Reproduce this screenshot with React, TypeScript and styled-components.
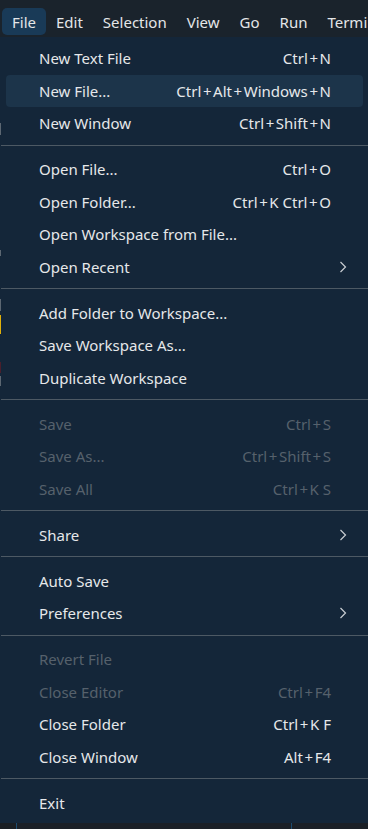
import styled, { createGlobalStyle } from "styled-components";

const GlobalStyle = createGlobalStyle`
  html, body {
    margin: 0;
    padding: 0;
    background: #1a1f24;
  }

  body {
    font-family: "Noto Sans", "Open Sans", sans-serif;
    -webkit-font-smoothing: antialiased;
  }
`;

const Page = styled.div`
  width: 368px;
  height: 829px;
  overflow: hidden;
  display: flex;
  flex-direction: column;
`;

const MenuBar = styled.div`
  height: 37px;
  box-sizing: border-box;
  padding: 8px 0 2px 2px;
  display: flex;
  background-color: #1a232c;
  white-space: nowrap;
  overflow: hidden;
`;

interface BarItemProps {
  $open?: boolean;
}

const BarItem = styled.div<BarItemProps>`
  height: 27px;
  padding: 0 10px;
  display: flex;
  align-items: center;
  border-radius: 5px;
  font-size: 15px;
  color: #e4e6e8;
  background-color: ${(props) => (props.$open ? "#193a57" : "transparent")};
`;

const Body = styled.div`
  display: flex;
  height: 786px;
`;

const Gutter = styled.div`
  width: 1px;
  background: linear-gradient(
    to bottom,
    #142639 0,
    #142639 86px,
    #5c6772 86px,
    #5c6772 98px,
    #142639 98px,
    #142639 213px,
    #5c6772 213px,
    #5c6772 219px,
    #142639 219px,
    #142639 262px,
    #5c6772 262px,
    #5c6772 274px,
    #142639 274px,
    #142639 278px,
    #e0b00a 278px,
    #e0b00a 297px,
    #142639 297px,
    #142639 325px,
    #4a1f2c 325px,
    #4a1f2c 336px,
    #142639 336px,
    #142639 339px,
    #5c6772 339px,
    #5c6772 349px,
    #142639 349px
  );
`;

const Panel = styled.div`
  flex: 1;
  box-sizing: border-box;
  padding: 5px 5px 4px;
  background-color: #142639;
  display: flex;
  flex-direction: column;
`;

interface ItemProps {
  $active?: boolean;
  $disabled?: boolean;
}

const Item = styled.div<ItemProps>`
  position: relative;
  height: 32.5px;
  flex-shrink: 0;
  padding: 0 32px 0 33px;
  display: flex;
  align-items: center;
  justify-content: space-between;
  border-radius: 4px;
  font-size: 15px;
  color: ${(props) => (props.$disabled ? "#56616c" : "#e6e8ea")};
  background-color: ${(props) => (props.$active ? "#1c344a" : "transparent")};
  white-space: nowrap;
`;

const Shortcut = styled.span`
  margin-left: 16px;
`;

const Plus = styled.span`
  padding: 0 1.6px;
`;

const Chevron = styled.svg`
  position: absolute;
  right: 16px;
  top: 50%;
  transform: translateY(-50%);
`;

const Separator = styled.div`
  height: 1px;
  flex-shrink: 0;
  margin: 5px -5px 7.5px;
  background-color: #4d5964;
`;

const Footer = styled.div`
  flex: 1;
  display: flex;
  background-color: #1a1e23;
`;

interface PaneProps {
  $width?: number;
  $border?: boolean;
}

const Pane = styled.div<PaneProps>`
  ${(props) => (props.$width ? `width: ${props.$width}px;` : "flex: 1;")}
  border-left: ${(props) => (props.$border ? "1px solid #1c4b70" : "none")};
  background-color: ${(props) => (props.$width === 16 ? "#1a1e23" : "#1b2027")};
`;

type Entry =
  | "sep"
  | {
      label: string;
      shortcut?: string;
      submenu?: boolean;
      disabled?: boolean;
      active?: boolean;
    };

const barItems = ["File", "Edit", "Selection", "View", "Go", "Run", "Terminal"];

const entries: Entry[] = [
  { label: "New Text File", shortcut: "Ctrl+N" },
  { label: "New File...", shortcut: "Ctrl+Alt+Windows+N", active: true },
  { label: "New Window", shortcut: "Ctrl+Shift+N" },
  "sep",
  { label: "Open File...", shortcut: "Ctrl+O" },
  { label: "Open Folder...", shortcut: "Ctrl+K Ctrl+O" },
  { label: "Open Workspace from File..." },
  { label: "Open Recent", submenu: true },
  "sep",
  { label: "Add Folder to Workspace..." },
  { label: "Save Workspace As..." },
  { label: "Duplicate Workspace" },
  "sep",
  { label: "Save", shortcut: "Ctrl+S", disabled: true },
  { label: "Save As...", shortcut: "Ctrl+Shift+S", disabled: true },
  { label: "Save All", shortcut: "Ctrl+K S", disabled: true },
  "sep",
  { label: "Share", submenu: true },
  "sep",
  { label: "Auto Save" },
  { label: "Preferences", submenu: true },
  "sep",
  { label: "Revert File", disabled: true },
  { label: "Close Editor", shortcut: "Ctrl+F4", disabled: true },
  { label: "Close Folder", shortcut: "Ctrl+K F" },
  { label: "Close Window", shortcut: "Alt+F4" },
  "sep",
  { label: "Exit" },
];

// Segoe-style shortcuts have a wider "+" than Noto Sans
function renderShortcut(text: string) {
  return text.split("+").map((part, i) => (
    <span key={i}>
      {i > 0 && <Plus>+</Plus>}
      {part}
    </span>
  ));
}

function App() {
  return (
    <>
      <GlobalStyle />
      <Page>
        <MenuBar>
          {barItems.map((name, i) => (
            <BarItem key={name} $open={i === 0}>
              {name}
            </BarItem>
          ))}
        </MenuBar>
        <Body>
          <Gutter />
          <Panel>
            {entries.map((entry, i) => {
              if (entry === "sep") return <Separator key={i} />;
              return (
                <Item key={i} $active={entry.active} $disabled={entry.disabled}>
                  <span>{entry.label}</span>
                  {entry.shortcut && (
                    <Shortcut>{renderShortcut(entry.shortcut)}</Shortcut>
                  )}
                  {entry.submenu && (
                    <Chevron width="8" height="12" viewBox="0 0 8 12">
                      <polyline
                        points="1.5,1 6.5,6 1.5,11"
                        fill="none"
                        stroke="#c9ced3"
                        strokeWidth="1.2"
                      />
                    </Chevron>
                  )}
                </Item>
              );
            })}
          </Panel>
        </Body>
        <Footer>
          <Pane $width={16} />
          <Pane $width={274} $border />
          <Pane $border />
        </Footer>
      </Page>
    </>
  );
}

export default App;
